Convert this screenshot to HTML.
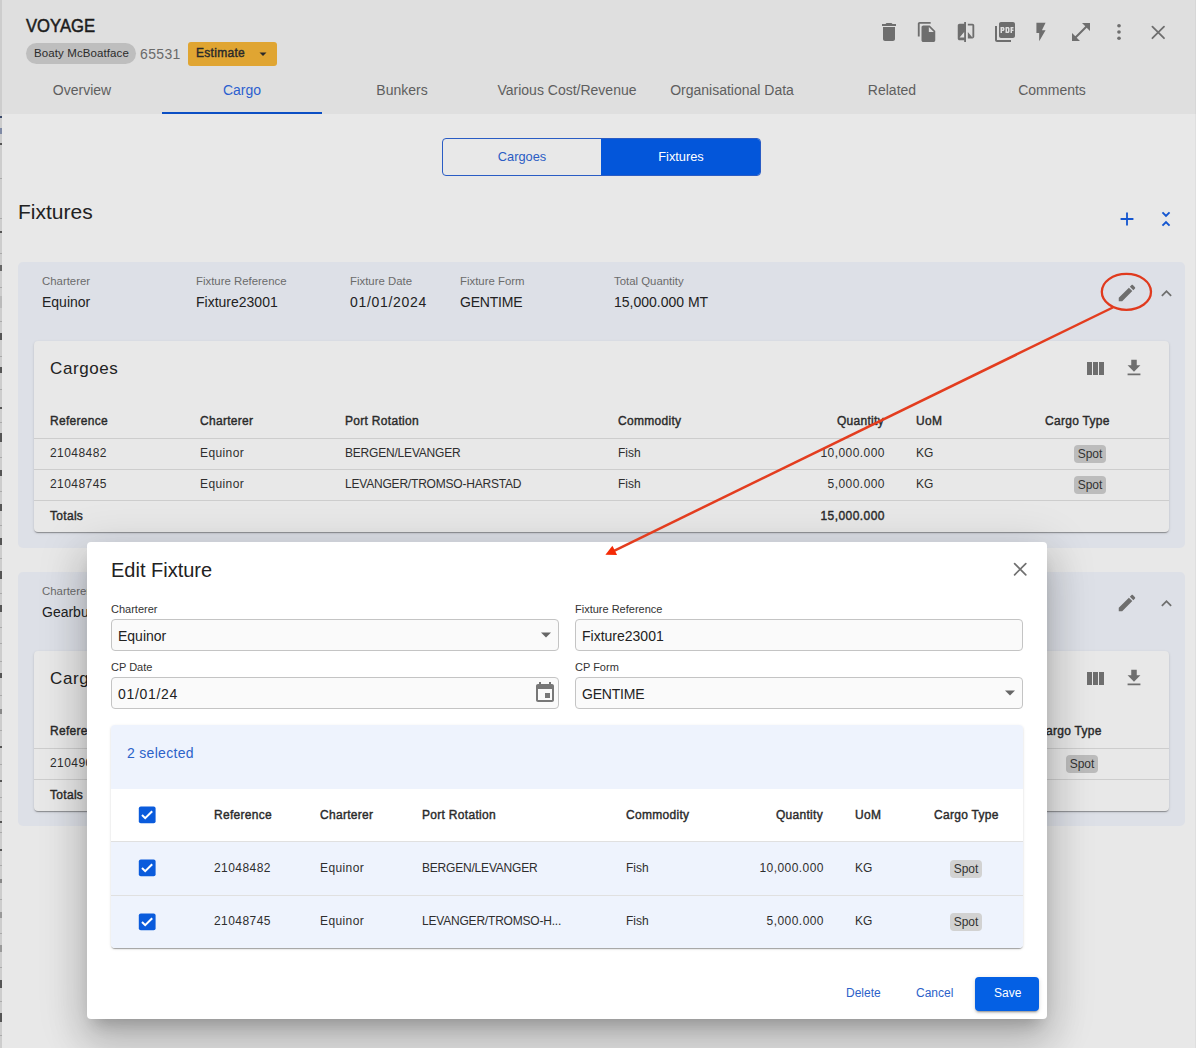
<!DOCTYPE html>
<html><head><meta charset="utf-8">
<style>
*{box-sizing:border-box;margin:0;padding:0}
html,body{width:1196px;height:1048px;overflow:hidden}
body{position:relative;background:#e8e8e8;font-family:"Liberation Sans",sans-serif;color:#212121}
.a{position:absolute}
.t{position:absolute;white-space:nowrap;line-height:1}
svg{display:block;position:absolute}
.tab{position:absolute;top:83px;font-size:14px;color:#5e5e5e;white-space:nowrap;line-height:14px;transform:translateX(-50%)}
.lbl{position:absolute;white-space:nowrap;line-height:1;font-size:11.4px;color:#6b6b6b}
.val{position:absolute;white-space:nowrap;line-height:1;font-size:14px;color:#222}
.card{position:absolute;background:#dde0e7;border-radius:5px}
.inner{position:absolute;background:#e8e8e8;border-radius:4px;box-shadow:0 2px 1px -1px rgba(0,0,0,.2),0 1px 1px 0 rgba(0,0,0,.14),0 1px 3px 0 rgba(0,0,0,.12)}
.th{position:absolute;white-space:nowrap;line-height:1;font-size:12px;font-weight:normal;color:#2a2a2a;-webkit-text-stroke:0.4px #2a2a2a;letter-spacing:0.3px}
.td{position:absolute;white-space:nowrap;line-height:1;font-size:12px;color:#2e2e2e}
.hl{position:absolute;height:1px;background:#cdcdcd}
.chip{position:absolute;background:#bcbcbc;border-radius:4px;font-size:12px;color:#333;text-align:center;line-height:18px;height:18px;width:32px}
.icg{fill:#6e6e6e}
.dg{letter-spacing:0.45px}
.val.dg{letter-spacing:0.7px}
.cp{letter-spacing:-0.2px}
.eq{letter-spacing:0.4px}
</style></head><body>
<div id="strip" class="a" style="left:0;top:0;width:2px;height:1048px;background:#cdcdcd"></div>
<div class="a" style="left:0;top:116px;width:2px;height:2px;background:#3a4a6a"></div><div class="a" style="left:0;top:128px;width:2px;height:6px;background:#7f8aa5"></div><div class="a" style="left:0;top:143px;width:2px;height:2px;background:#555"></div><div class="a" style="left:0;top:178px;width:2px;height:1px;background:#aaa"></div><div class="a" style="left:0;top:218px;width:2px;height:1px;background:#aaa"></div><div class="a" style="left:0;top:231px;width:2px;height:2px;background:#555"></div><div class="a" style="left:0;top:253px;width:2px;height:1px;background:#aaa"></div><div class="a" style="left:0;top:265px;width:2px;height:6px;background:#666"></div><div class="a" style="left:0;top:287px;width:2px;height:1px;background:#aaa"></div><div class="a" style="left:0;top:296px;width:2px;height:12px;background:#bbb"></div><div class="a" style="left:0;top:321px;width:2px;height:1px;background:#aaa"></div><div class="a" style="left:0;top:333px;width:2px;height:7px;background:#555"></div><div class="a" style="left:0;top:356px;width:2px;height:1px;background:#aaa"></div><div class="a" style="left:0;top:367px;width:2px;height:6px;background:#555"></div><div class="a" style="left:0;top:389px;width:2px;height:1px;background:#aaa"></div><div class="a" style="left:0;top:407px;width:2px;height:2px;background:#555"></div><div class="a" style="left:0;top:422px;width:2px;height:1px;background:#aaa"></div><div class="a" style="left:0;top:433px;width:2px;height:9px;background:#555"></div><div class="a" style="left:0;top:457px;width:2px;height:1px;background:#aaa"></div><div class="a" style="left:0;top:470px;width:2px;height:6px;background:#555"></div><div class="a" style="left:0;top:491px;width:2px;height:1px;background:#aaa"></div><div class="a" style="left:0;top:504px;width:2px;height:7px;background:#555"></div><div class="a" style="left:0;top:525px;width:2px;height:1px;background:#aaa"></div><div class="a" style="left:0;top:538px;width:2px;height:7px;background:#555"></div><div class="a" style="left:0;top:558px;width:2px;height:1px;background:#aaa"></div><div class="a" style="left:0;top:571px;width:2px;height:8px;background:#555"></div><div class="a" style="left:0;top:593px;width:2px;height:1px;background:#aaa"></div><div class="a" style="left:0;top:605px;width:2px;height:7px;background:#555"></div><div class="a" style="left:0;top:627px;width:2px;height:1px;background:#aaa"></div><div class="a" style="left:0;top:643px;width:2px;height:1px;background:#aaa"></div><div class="a" style="left:0;top:661px;width:2px;height:1px;background:#aaa"></div><div class="a" style="left:0;top:673px;width:2px;height:5px;background:#555"></div><div class="a" style="left:0;top:695px;width:2px;height:1px;background:#aaa"></div><div class="a" style="left:0;top:709px;width:2px;height:5px;background:#888"></div><div class="a" style="left:0;top:730px;width:2px;height:1px;background:#aaa"></div><div class="a" style="left:0;top:746px;width:2px;height:2px;background:#555"></div><div class="a" style="left:0;top:764px;width:2px;height:1px;background:#aaa"></div><div class="a" style="left:0;top:780px;width:2px;height:2px;background:#555"></div><div class="a" style="left:0;top:797px;width:2px;height:1px;background:#aaa"></div><div class="a" style="left:0;top:811px;width:2px;height:1px;background:#aaa"></div><div class="a" style="left:0;top:821px;width:2px;height:2px;background:#555"></div><div class="a" style="left:0;top:832px;width:2px;height:1px;background:#aaa"></div><div class="a" style="left:0;top:849px;width:2px;height:2px;background:#555"></div><div class="a" style="left:0;top:865px;width:2px;height:1px;background:#aaa"></div><div class="a" style="left:0;top:879px;width:2px;height:4px;background:#888"></div><div class="a" style="left:0;top:899px;width:2px;height:1px;background:#aaa"></div><div class="a" style="left:0;top:912px;width:2px;height:6px;background:#999"></div><div class="a" style="left:0;top:933px;width:2px;height:1px;background:#aaa"></div><div class="a" style="left:0;top:945px;width:2px;height:7px;background:#999"></div><div class="a" style="left:0;top:967px;width:2px;height:1px;background:#aaa"></div><div class="a" style="left:0;top:980px;width:2px;height:8px;background:#555"></div><div class="a" style="left:0;top:1001px;width:2px;height:1px;background:#aaa"></div><div class="a" style="left:0;top:1013px;width:2px;height:9px;background:#555"></div><div class="a" style="left:0;top:1035px;width:2px;height:1px;background:#aaa"></div>
<div class="a" style="left:2px;top:0;width:1194px;height:114px;background:#dfdfdf"></div>
<!-- title area -->
<div class="t" style="left:26px;top:17px;font-size:18px;color:#1c1c1c;-webkit-text-stroke:0.5px #1c1c1c;transform:scaleX(0.925);transform-origin:0 0">VOYAGE</div>
<div class="a" style="left:26px;top:43px;width:110px;height:21px;border-radius:11px;background:#bebebe"></div>
<div class="t" style="left:34px;top:48px;font-size:11.5px;color:#2b2b2b;letter-spacing:0.1px">Boaty McBoatface</div>
<div class="t" style="left:140px;top:47px;font-size:14px;color:#6a6a6a;letter-spacing:0.35px">65531</div>
<div class="a" style="left:188px;top:42px;width:89px;height:24px;border-radius:3px;background:#e0a532"></div>
<div class="t" style="left:196px;top:47px;font-size:12px;color:#2a2a2a;-webkit-text-stroke:0.4px #2a2a2a;letter-spacing:0.3px">Estimate</div>
<svg style="left:258px;top:49px" width="10" height="10" viewBox="0 0 10 10"><path d="M1.5 3.5h7L5 7z" fill="#2a2a2a"/></svg>
<!-- header icons -->
<svg style="left:877px;top:20px" width="24" height="24" viewBox="0 0 24 24" class="icg"><path d="M6 19c0 1.1.9 2 2 2h8c1.1 0 2-.9 2-2V7H6v12zM19 4h-3.5l-1-1h-5l-1 1H5v2h14V4z"/></svg>
<svg style="left:916px;top:21px" width="22" height="22" viewBox="0 0 24 24" class="icg"><path d="M16 1H4c-1.1 0-2 .9-2 2v14h2V3h12V1zm-1 4l6 6v10c0 1.1-.9 2-2 2H7.99C6.89 23 6 22.1 6 21l.01-14c0-1.1.89-2 1.99-2h7zm-1 7h5.5L14 6.5V12z"/></svg>
<svg style="left:955px;top:21px" width="22" height="22" viewBox="0 0 24 24" class="icg"><path d="M10 3H5c-1.11 0-2 .9-2 2v14c0 1.1.89 2 2 2h5v2h2V1h-2v2zm0 15H5l5-6v6zm9-15h-5v2h5v13l-5-6v7h5c1.1 0 2-.9 2-2V5c0-1.1-.9-2-2-2z"/></svg>
<svg style="left:993px;top:20px" width="24" height="24" viewBox="0 0 24 24" class="icg"><path d="M20 2H8c-1.1 0-2 .9-2 2v12c0 1.1.9 2 2 2h12c1.1 0 2-.9 2-2V4c0-1.1-.9-2-2-2zm-8.5 7.5c0 .83-.67 1.5-1.5 1.5H9v2H7.5V7H10c.83 0 1.5.67 1.5 1.5v1zm5 2c0 .83-.67 1.5-1.5 1.5h-2.5V7H15c.83 0 1.5.67 1.5 1.5v3zm4-3H19v1h1.5V11H19v2h-1.5V7h3v1.5zM9 9.5h1v-1H9v1zM4 6H2v14c0 1.1.9 2 2 2h14v-2H4V6zm10 5.5h1v-3h-1v3z"/></svg>
<svg style="left:1030px;top:21px" width="22" height="22" viewBox="0 0 24 24" class="icg"><path d="M7 2v11h3v9l7-12h-4l4-8z"/></svg>
<svg style="left:1069px;top:20px" width="24" height="24" viewBox="0 0 24 24" class="icg"><path d="M21 11V3h-8l3.29 3.29-10 10L3 13v8h8l-3.29-3.29 10-10z"/></svg>
<svg style="left:1109px;top:22px" width="20" height="20" viewBox="0 0 24 24" class="icg"><circle cx="12" cy="4.5" r="2.2"/><circle cx="12" cy="12" r="2.2"/><circle cx="12" cy="19.5" r="2.2"/></svg>
<svg style="left:1148px;top:22px" width="20" height="20" viewBox="0 0 20 20"><path d="M4.4 4.6L16 16.2M16 4.6L4.4 16.2" stroke="#6e6e6e" stroke-width="1.8" stroke-linecap="round"/></svg>
<!-- tabs -->
<div class="tab" style="left:82px">Overview</div>
<div class="tab" style="left:242px;color:#2c5fcf">Cargo</div>
<div class="tab" style="left:402px">Bunkers</div>
<div class="tab" style="left:567px">Various Cost/Revenue</div>
<div class="tab" style="left:732px">Organisational Data</div>
<div class="tab" style="left:892px">Related</div>
<div class="tab" style="left:1052px">Comments</div>
<div class="a" style="left:162px;top:112px;width:160px;height:2px;background:#0b4fc4"></div>
<!-- segmented -->
<div class="a" style="left:442px;top:138px;width:319px;height:38px;border:1px solid #2a5cc4;border-radius:4px;overflow:hidden">
 <div class="a" style="left:158px;top:0;width:161px;height:38px;background:#0356da"></div>
</div>
<div class="t" style="left:522px;top:151px;font-size:12.8px;color:#2a5cc4;transform:translateX(-50%)">Cargoes</div>
<div class="t" style="left:681px;top:151px;font-size:12.8px;color:#fff;transform:translateX(-50%)">Fixtures</div>
<!-- Fixtures heading -->
<div class="t" style="left:18px;top:201px;font-size:21px;color:#222">Fixtures</div>
<svg style="left:1116px;top:208px" width="22" height="22" viewBox="0 0 24 24" fill="#1456d0"><path d="M19 13h-6v6h-2v-6H5v-2h6V5h2v6h6v2z"/></svg>
<svg style="left:1155px;top:208px" width="22" height="22" viewBox="0 0 24 24" fill="#1456d0"><path d="M7.41 18.59L8.83 20 12 16.83 15.17 20l1.41-1.41L12 14l-4.59 4.59zm9.18-13.18L15.17 4 12 7.17 8.83 4 7.41 5.41 12 10l4.59-4.59z"/></svg>

<!-- Fixture card 1 -->
<div class="card" style="left:18px;top:262px;width:1167px;height:286px"></div>
<div class="lbl" style="left:42px;top:276px">Charterer</div>
<div class="val" style="left:42px;top:295px">Equinor</div>
<div class="lbl" style="left:196px;top:276px">Fixture Reference</div>
<div class="val" style="left:196px;top:295px">Fixture23001</div>
<div class="lbl" style="left:350px;top:276px">Fixture Date</div>
<div class="val dg" style="left:350px;top:295px">01/01/2024</div>
<div class="lbl" style="left:460px;top:276px">Fixture Form</div>
<div class="val cp" style="left:460px;top:295px">GENTIME</div>
<div class="lbl" style="left:614px;top:276px">Total Quantity</div>
<div class="val" style="left:614px;top:295px">15,000.000 MT</div>
<svg style="left:1116px;top:282px" width="22" height="22" viewBox="0 0 24 24" class="icg"><path d="M3 17.25V21h3.75L17.81 9.94l-3.75-3.75L3 17.25zM20.71 7.04c.39-.39.39-1.02 0-1.41l-2.34-2.34c-.39-.39-1.02-.39-1.41 0l-1.83 1.83 3.75 3.75 1.83-1.83z"/></svg>
<svg style="left:1156px;top:283px" width="21" height="21" viewBox="0 0 24 24" class="icg"><path d="M12 8l-6 6 1.41 1.41L12 10.83l4.59 4.58L18 14z"/></svg>

<div class="inner" style="left:34px;top:341px;width:1135px;height:191px"></div>
<div class="t" style="left:50px;top:360px;font-size:17px;color:#222;letter-spacing:0.6px">Cargoes</div>
<svg style="left:1083px;top:357px" width="24" height="24" viewBox="0 0 24 24" class="icg"><path d="M10 18h5V5h-5v13zm-6 0h5V5H4v13zM16 5v13h5V5h-5z"/></svg>
<svg style="left:1123px;top:357px" width="22" height="22" viewBox="0 0 24 24" class="icg"><path d="M19 9h-4V3H9v6H5l7 7 7-7zM5 18v2h14v-2H5z"/></svg>
<div class="th" style="left:50px;top:415px">Reference</div>
<div class="th" style="left:200px;top:415px">Charterer</div>
<div class="th" style="left:345px;top:415px">Port Rotation</div>
<div class="th" style="left:618px;top:415px">Commodity</div>
<div class="th" style="left:784px;top:415px;width:100px;text-align:right">Quantity</div>
<div class="th" style="left:916px;top:415px">UoM</div>
<div class="th" style="left:1045px;top:415px">Cargo Type</div>
<div class="hl" style="left:34px;top:438px;width:1135px"></div>
<div class="td dg" style="left:50px;top:447px">21048482</div>
<div class="td eq" style="left:200px;top:447px">Equinor</div>
<div class="td cp" style="left:345px;top:447px">BERGEN/LEVANGER</div>
<div class="td" style="left:618px;top:447px">Fish</div>
<div class="td dg" style="left:785px;top:447px;width:100px;text-align:right">10,000.000</div>
<div class="td" style="left:916px;top:447px">KG</div>
<div class="chip" style="left:1074px;top:445px">Spot</div>
<div class="hl" style="left:34px;top:469px;width:1135px"></div>
<div class="td dg" style="left:50px;top:478px">21048745</div>
<div class="td eq" style="left:200px;top:478px">Equinor</div>
<div class="td cp" style="left:345px;top:478px">LEVANGER/TROMSO-HARSTAD</div>
<div class="td" style="left:618px;top:478px">Fish</div>
<div class="td dg" style="left:785px;top:478px;width:100px;text-align:right">5,000.000</div>
<div class="td" style="left:916px;top:478px">KG</div>
<div class="chip" style="left:1074px;top:476px">Spot</div>
<div class="hl" style="left:34px;top:500px;width:1135px"></div>
<div class="th" style="left:50px;top:510px">Totals</div>
<div class="th dg" style="left:785px;top:510px;width:100px;text-align:right">15,000.000</div>

<!-- Fixture card 2 -->
<div class="card" style="left:18px;top:572px;width:1167px;height:254px"></div>
<div class="lbl" style="left:42px;top:586px">Charterer</div>
<div class="val" style="left:42px;top:605px">Gearbulk</div>
<svg style="left:1116px;top:592px" width="22" height="22" viewBox="0 0 24 24" class="icg"><path d="M3 17.25V21h3.75L17.81 9.94l-3.75-3.75L3 17.25zM20.71 7.04c.39-.39.39-1.02 0-1.41l-2.34-2.34c-.39-.39-1.02-.39-1.41 0l-1.83 1.83 3.75 3.75 1.83-1.83z"/></svg>
<svg style="left:1156px;top:593px" width="21" height="21" viewBox="0 0 24 24" class="icg"><path d="M12 8l-6 6 1.41 1.41L12 10.83l4.59 4.58L18 14z"/></svg>
<div class="inner" style="left:34px;top:651px;width:1135px;height:160px"></div>
<div class="t" style="left:50px;top:670px;font-size:17px;color:#222;letter-spacing:0.6px">Cargoes</div>
<svg style="left:1083px;top:667px" width="24" height="24" viewBox="0 0 24 24" class="icg"><path d="M10 18h5V5h-5v13zm-6 0h5V5H4v13zM16 5v13h5V5h-5z"/></svg>
<svg style="left:1123px;top:667px" width="22" height="22" viewBox="0 0 24 24" class="icg"><path d="M19 9h-4V3H9v6H5l7 7 7-7zM5 18v2h14v-2H5z"/></svg>
<div class="th" style="left:50px;top:725px">Reference</div>
<div class="th" style="left:1037px;top:725px">Cargo Type</div>
<div class="hl" style="left:34px;top:748px;width:1135px"></div>
<div class="td dg" style="left:50px;top:757px">21049001</div>
<div class="chip" style="left:1066px;top:755px">Spot</div>
<div class="hl" style="left:34px;top:779px;width:1135px"></div>
<div class="th" style="left:50px;top:789px">Totals</div>

<!-- Modal -->
<div class="a" style="left:87px;top:542px;width:960px;height:477px;background:#fff;border-radius:4px;box-shadow:0 11px 15px -7px rgba(0,0,0,.2),0 24px 38px 3px rgba(0,0,0,.14),0 9px 46px 8px rgba(0,0,0,.12)"></div>
<div class="t" style="left:111px;top:560px;font-size:20px;color:#222">Edit Fixture</div>
<svg style="left:1010px;top:559px" width="20" height="20" viewBox="0 0 20 20"><path d="M4.6 4.6L15.8 15.8M15.8 4.6L4.6 15.8" stroke="#707070" stroke-width="1.7" stroke-linecap="round"/></svg>
<div class="lbl" style="left:111px;top:604px;color:#333;font-size:11px">Charterer</div>
<div class="a" style="left:111px;top:619px;width:448px;height:32px;border:1px solid #c4c4c4;border-radius:4px;background:#fafafa"></div>
<div class="val" style="left:118px;top:629px">Equinor</div>
<svg style="left:540px;top:630px" width="12" height="10" viewBox="0 0 12 10"><path d="M1 2.5h10L6 7.5z" fill="#666"/></svg>
<div class="lbl" style="left:575px;top:604px;color:#333;font-size:11px">Fixture Reference</div>
<div class="a" style="left:575px;top:619px;width:448px;height:32px;border:1px solid #c4c4c4;border-radius:4px;background:#fafafa"></div>
<div class="val" style="left:582px;top:629px">Fixture23001</div>
<div class="lbl" style="left:111px;top:662px;color:#333;font-size:11px">CP Date</div>
<div class="a" style="left:111px;top:677px;width:448px;height:32px;border:1px solid #c4c4c4;border-radius:4px;background:#fafafa"></div>
<div class="val dg" style="left:118px;top:687px">01/01/24</div>
<svg style="left:533px;top:681px" width="24" height="24" viewBox="0 0 24 24" fill="#777"><path d="M17 12h-5v5h5v-5zM16 1v2H8V1H6v2H5c-1.11 0-1.99.9-1.99 2L3 19c0 1.1.89 2 2 2h14c1.1 0 2-.9 2-2V5c0-1.1-.9-2-2-2h-1V1h-2zm3 18H5V8h14v11z"/></svg>
<div class="lbl" style="left:575px;top:662px;color:#333;font-size:11px">CP Form</div>
<div class="a" style="left:575px;top:677px;width:448px;height:32px;border:1px solid #c4c4c4;border-radius:4px;background:#fafafa"></div>
<div class="val cp" style="left:582px;top:687px">GENTIME</div>
<svg style="left:1004px;top:688px" width="12" height="10" viewBox="0 0 12 10"><path d="M1 2.5h10L6 7.5z" fill="#666"/></svg>

<!-- selection table -->
<div class="a" style="left:111px;top:725px;width:912px;height:223px;border-radius:4px;overflow:hidden;box-shadow:0 2px 1px -1px rgba(0,0,0,.2),0 1px 1px 0 rgba(0,0,0,.14),0 1px 3px 0 rgba(0,0,0,.12)">
 <div class="a" style="left:0;top:0;width:912px;height:64px;background:#eef3fd"></div>
 <div class="a" style="left:0;top:64px;width:912px;height:52px;background:#fff"></div>
 <div class="a" style="left:0;top:116px;width:912px;height:1px;background:#e0e0e0"></div>
 <div class="a" style="left:0;top:117px;width:912px;height:53px;background:#eef3fd"></div>
 <div class="a" style="left:0;top:170px;width:912px;height:1px;background:#e0e0e0"></div>
 <div class="a" style="left:0;top:171px;width:912px;height:52px;background:#eef3fd"></div>
</div>
<div class="t" style="left:127px;top:746px;font-size:14px;color:#2c62c9;letter-spacing:0.3px">2 selected</div>
<svg style="left:137px;top:805px" width="20" height="20" viewBox="0 0 20 20"><rect x="1.8" y="1.5" width="16.8" height="16.8" rx="2" fill="#0a5bdc"/><path d="M5 10l3.2 3.2 7-7" stroke="#fff" stroke-width="2" fill="none"/></svg>
<svg style="left:137px;top:858px" width="20" height="20" viewBox="0 0 20 20"><rect x="1.8" y="1.5" width="16.8" height="16.8" rx="2" fill="#0a5bdc"/><path d="M5 10l3.2 3.2 7-7" stroke="#fff" stroke-width="2" fill="none"/></svg>
<svg style="left:137px;top:912px" width="20" height="20" viewBox="0 0 20 20"><rect x="1.8" y="1.5" width="16.8" height="16.8" rx="2" fill="#0a5bdc"/><path d="M5 10l3.2 3.2 7-7" stroke="#fff" stroke-width="2" fill="none"/></svg>
<div class="th" style="left:214px;top:809px">Reference</div>
<div class="th" style="left:320px;top:809px">Charterer</div>
<div class="th" style="left:422px;top:809px">Port Rotation</div>
<div class="th" style="left:626px;top:809px">Commodity</div>
<div class="th" style="left:723px;top:809px;width:100px;text-align:right">Quantity</div>
<div class="th" style="left:855px;top:809px">UoM</div>
<div class="th" style="left:934px;top:809px">Cargo Type</div>
<div class="td dg" style="left:214px;top:862px">21048482</div>
<div class="td eq" style="left:320px;top:862px">Equinor</div>
<div class="td cp" style="left:422px;top:862px">BERGEN/LEVANGER</div>
<div class="td" style="left:626px;top:862px">Fish</div>
<div class="td dg" style="left:724px;top:862px;width:100px;text-align:right">10,000.000</div>
<div class="td" style="left:855px;top:862px">KG</div>
<div class="chip" style="left:950px;top:860px;background:#d2d2d2">Spot</div>
<div class="td dg" style="left:214px;top:915px">21048745</div>
<div class="td eq" style="left:320px;top:915px">Equinor</div>
<div class="td cp" style="left:422px;top:915px">LEVANGER/TROMSO-H...</div>
<div class="td" style="left:626px;top:915px">Fish</div>
<div class="td dg" style="left:724px;top:915px;width:100px;text-align:right">5,000.000</div>
<div class="td" style="left:855px;top:915px">KG</div>
<div class="chip" style="left:950px;top:913px;background:#d2d2d2">Spot</div>
<!-- buttons -->
<div class="t" style="left:846px;top:987px;font-size:12px;color:#2c62c9">Delete</div>
<div class="t" style="left:916px;top:987px;font-size:12px;color:#2c62c9">Cancel</div>
<div class="a" style="left:975px;top:977px;width:64px;height:34px;border-radius:4px;background:#0460e4;box-shadow:0 3px 1px -2px rgba(0,0,0,.2),0 2px 2px 0 rgba(0,0,0,.14),0 1px 5px 0 rgba(0,0,0,.12)"></div>
<div class="t" style="left:994px;top:987px;font-size:12px;color:#fff">Save</div>

<div class="a" style="left:1195px;top:0;width:1px;height:1048px;background:rgba(0,0,0,0.035)"></div>
<!-- annotation -->
<svg style="left:0;top:0" width="1196" height="1048" viewBox="0 0 1196 1048">
 <ellipse cx="1126.4" cy="291.8" rx="24.6" ry="18" fill="none" stroke="#e03a1e" stroke-width="2.3"/>
 <line x1="1112.8" y1="307.5" x2="612" y2="551.8" stroke="#e33d1f" stroke-width="2.5"/>
 <path d="M605.4 554.8L612.4 545.8L617.1 555.1z" fill="#f52a05"/>
</svg>
</body></html>
